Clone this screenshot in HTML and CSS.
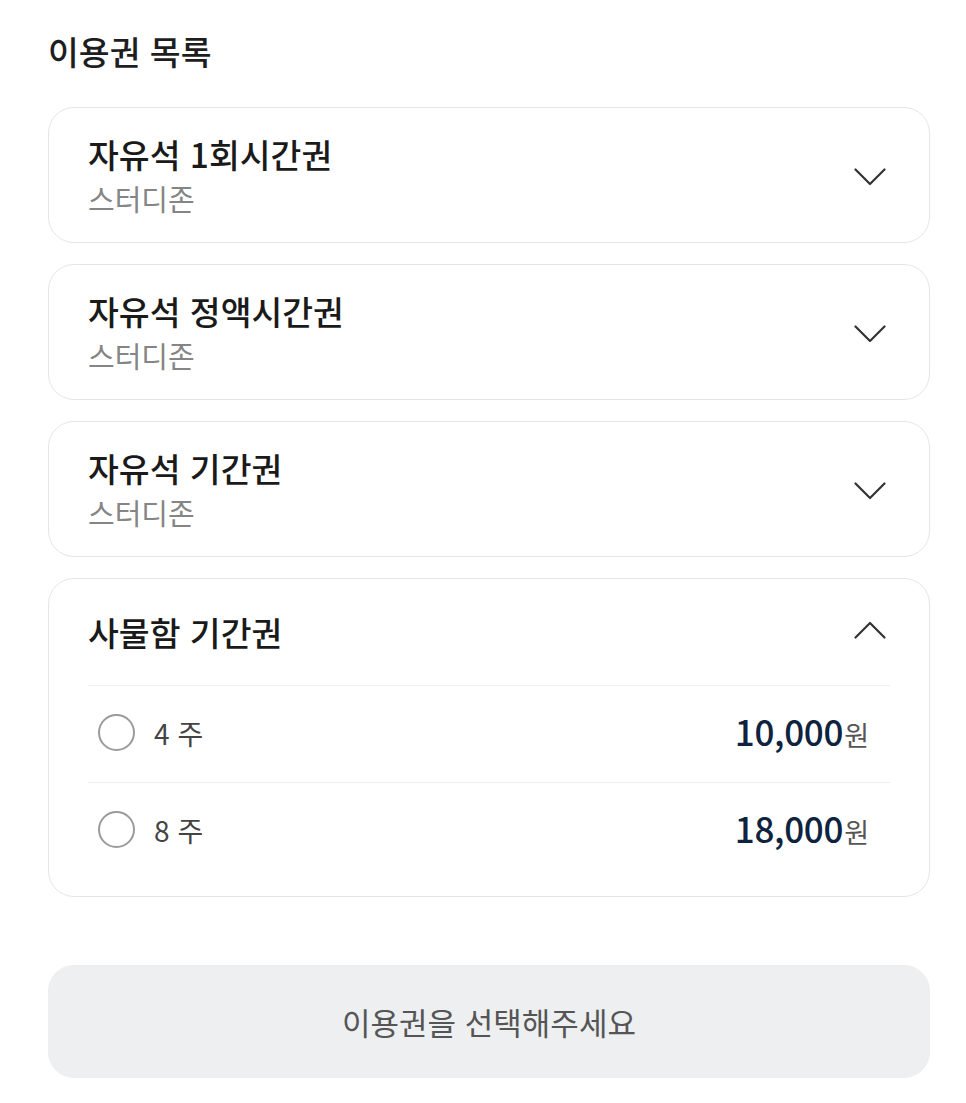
FILE: index.html
```html
<!DOCTYPE html>
<html lang="ko">
<head>
<meta charset="utf-8">
<title>이용권 목록</title>
<link rel="stylesheet" href="styles.css">
</head>
<body>
<main class="page">
  <h1 class="page-title">이용권 목록</h1>
  <div class="list">
    <section class="card">
      <div class="card-head">
        <div class="card-text">
          <div class="card-title">자유석 1회시간권</div>
          <div class="card-sub">스터디존</div>
        </div>
        <svg class="chev" viewBox="0 0 32 18" width="32" height="18"><path d="M1.5 1.5 L16 16 L30.5 1.5" /></svg>
      </div>
    </section>
    <section class="card">
      <div class="card-head">
        <div class="card-text">
          <div class="card-title">자유석 정액시간권</div>
          <div class="card-sub">스터디존</div>
        </div>
        <svg class="chev" viewBox="0 0 32 18" width="32" height="18"><path d="M1.5 1.5 L16 16 L30.5 1.5" /></svg>
      </div>
    </section>
    <section class="card">
      <div class="card-head">
        <div class="card-text">
          <div class="card-title">자유석 기간권</div>
          <div class="card-sub">스터디존</div>
        </div>
        <svg class="chev" viewBox="0 0 32 18" width="32" height="18"><path d="M1.5 1.5 L16 16 L30.5 1.5" /></svg>
      </div>
    </section>
    <section class="card card-open">
      <div class="card-head card-head-open">
        <div class="card-title">사물함 기간권</div>
        <svg class="chev" viewBox="0 0 32 18" width="32" height="18"><path d="M1.5 16.5 L16 2 L30.5 16.5" /></svg>
      </div>
      <div class="options">
        <label class="option">
          <span class="radio"></span>
          <span class="opt-label">4 주</span>
          <span class="price"><span class="amount">10,000</span><span class="won">원</span></span>
        </label>
        <label class="option">
          <span class="radio"></span>
          <span class="opt-label">8 주</span>
          <span class="price"><span class="amount">18,000</span><span class="won">원</span></span>
        </label>
      </div>
    </section>
  </div>
  <button class="submit" type="button">이용권을 선택해주세요</button>
</main>
</body>
</html>
```

FILE: styles.css
```css
* { box-sizing: border-box; }
html, body { margin: 0; padding: 0; background: #ffffff; }
body {
  font-family: "Noto Sans CJK KR", "Noto Sans", sans-serif;
  color: #222;
}
.page {
  padding: 27px 36px 0 48px;
}
.page-title {
  margin: 0 0 32px;
  font-size: 33.5px;
  line-height: 48px;
  font-weight: 500;
  color: #1e1e1e;
}
.list {
  display: flex;
  flex-direction: column;
  gap: 21px;
}
.card {
  border: 1px solid #e6e6e6;
  border-radius: 26px;
  background: #fff;
}
.card-head {
  display: flex;
  align-items: center;
  justify-content: space-between;
  height: 134px;
  padding: 0 43px 0 39px;
}
.card-text {
  display: flex;
  flex-direction: column;
  padding-top: 2px;
}
.card-title {
  font-size: 33.5px;
  line-height: 44px;
  font-weight: 500;
  color: #1a1a1a;
}
.card-sub {
  font-size: 29px;
  line-height: 44px;
  font-weight: 400;
  color: #858585;
}
.chev {
  display: block;
  margin-top: 4px;
  fill: none;
  stroke: #333;
  stroke-width: 2.2;
  stroke-linecap: round;
  stroke-linejoin: round;
}
.card-open { padding: 0 39px 17px; }
.card-head-open {
  height: 106px;
  padding: 0 4px 0 0;
}
.card-head-open .chev { margin-top: -4px; }
.options { display: flex; flex-direction: column; }
.option {
  display: flex;
  align-items: center;
  height: 97px;
  border-top: 1.5px solid #efefef;
  padding: 0 21px 3px 10px;
  cursor: pointer;
}
.radio {
  width: 37px;
  height: 37px;
  border-radius: 50%;
  border: 2px solid #9b9b9b;
  flex: none;
}
.opt-label {
  margin-left: 19px;
  font-size: 28px;
  color: #444;
  flex: 1;
}
.price {
  display: flex;
  align-items: baseline;
  margin-bottom: 4px;
}
.amount {
  font-size: 35px;
  font-weight: 500;
  color: #0e2340;
  letter-spacing: -0.3px;
}
.won {
  margin-left: 1px;
  font-size: 27px;
  color: #555;
}
.submit {
  display: block;
  width: 100%;
  margin-top: 68px;
  height: 113px;
  border: 1px solid #eceef0;
  border-radius: 26px;
  background: #eeeff1;
  font-family: inherit;
  font-size: 31px;
  color: #555;
}
```
